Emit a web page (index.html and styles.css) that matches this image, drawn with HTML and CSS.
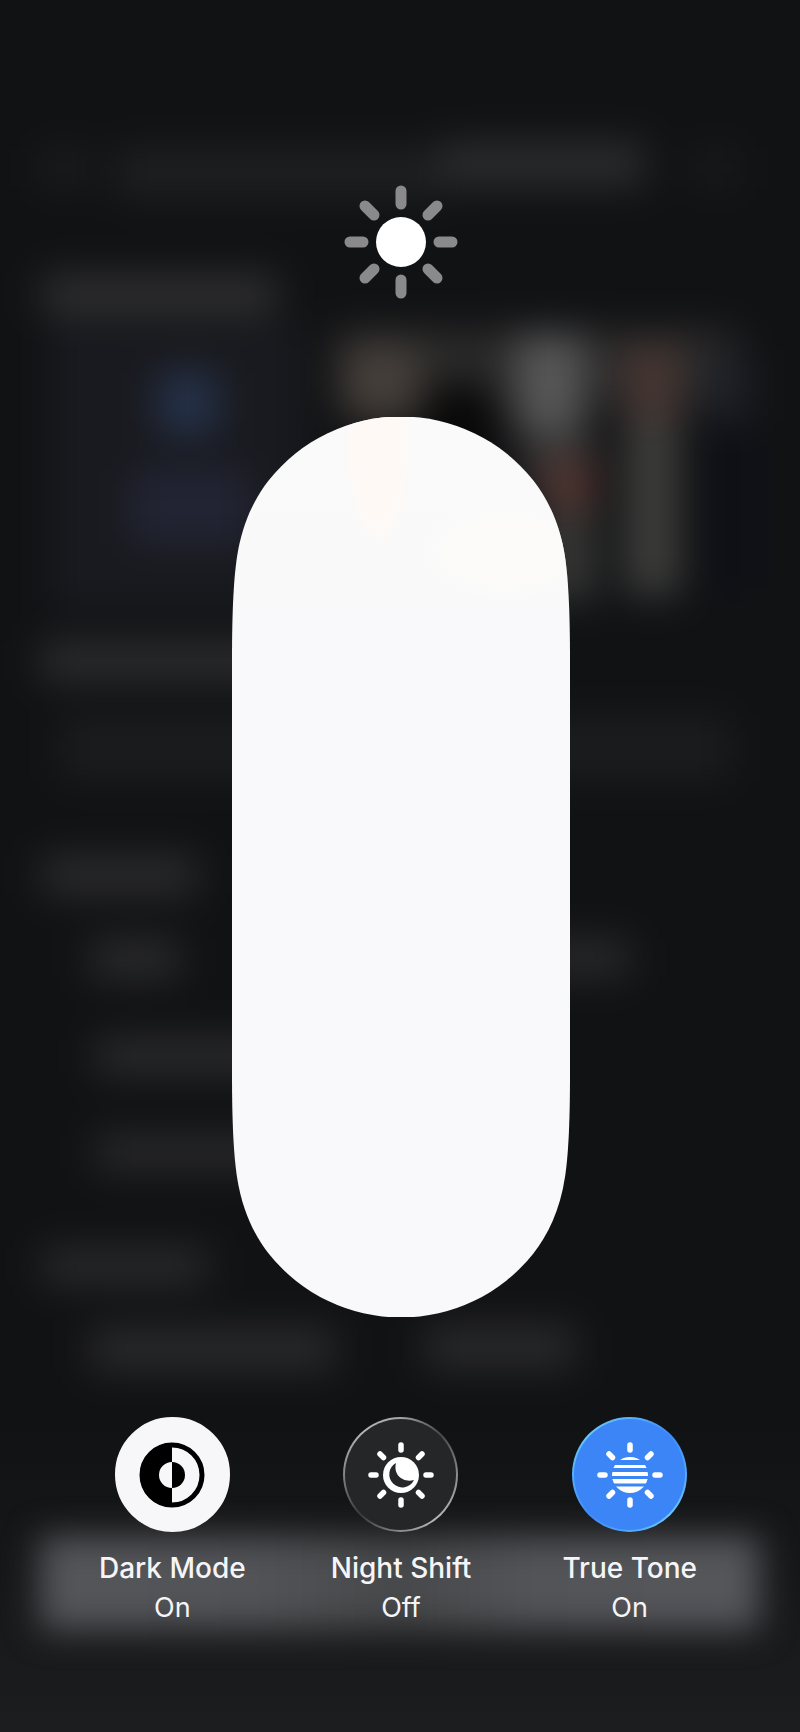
FILE: index.html
```html
<!DOCTYPE html>
<html lang="en">
  <head>
    <meta charset="UTF-8" />
    <meta name="viewport" content="width=device-width, initial-scale=1.0" />
    <title>Display Brightness</title>
    <link rel="stylesheet" href="styles.css">
  </head>
  <body>
    <!-- blurred home screen behind the panel -->
    <svg class="backdrop" viewBox="0 0 800 1732" preserveAspectRatio="none" aria-hidden="true">
      <defs>
        <filter id="soft" x="-10%" y="-10%" width="120%" height="120%" color-interpolation-filters="sRGB">
          <feGaussianBlur stdDeviation="19" />
        </filter>
        <filter id="dock" x="-20%" y="-60%" width="140%" height="220%" color-interpolation-filters="sRGB">
          <feGaussianBlur stdDeviation="17" />
        </filter>
        <linearGradient id="dock-fill">
          <stop offset="0" stop-color="#55565a" />
          <stop offset="0.3" stop-color="#525357" />
          <stop offset="0.5" stop-color="#47484a" />
          <stop offset="0.68" stop-color="#535458" />
          <stop offset="1" stop-color="#56575b" />
        </linearGradient>
        <linearGradient id="floor" x1="0" y1="0" x2="0" y2="1">
          <stop offset="0" stop-color="#1c1d1f" stop-opacity="0" />
          <stop offset="1" stop-color="#1c1d1f" />
        </linearGradient>
      </defs>
      <g filter="url(#soft)">
        <rect x="-80" y="-80" width="960" height="1892" fill="#111214" />
        <rect x="40" y="148" width="50" height="40" fill="#1b1c1d" />
        <rect x="115" y="148" width="330" height="50" fill="#1e1f20" />
        <rect x="440" y="142" width="205" height="44" fill="#2b2c2d" />
        <rect x="690" y="148" width="50" height="40" fill="#19191a" />
        <rect x="42" y="274" width="235" height="42" fill="#2e2e2f" />
        <rect x="50" y="325" width="255" height="285" fill="#191a1f" />
        <rect x="158" y="372" width="60" height="62" fill="#25324a" />
        <rect x="130" y="470" width="120" height="74" fill="#222434" />
        <rect x="335" y="330" width="400" height="75" fill="#2b2a2a" />
        <rect x="345" y="345" width="75" height="75" fill="#453f3a" />
        <rect x="425" y="385" width="65" height="80" fill="#090808" />
        <rect x="515" y="335" width="70" height="100" fill="#565656" />
        <rect x="525" y="440" width="70" height="50" fill="#393736" />
        <rect x="545" y="460" width="50" height="60" fill="#523430" />
        <rect x="540" y="510" width="55" height="90" fill="#353634" />
        <rect x="625" y="345" width="55" height="75" fill="#463632" />
        <rect x="625" y="420" width="55" height="175" fill="#3d3d3b" />
        <rect x="705" y="350" width="45" height="70" fill="#1f2128" />
        <rect x="705" y="430" width="50" height="160" fill="#0f1017" />
        <rect x="40" y="642" width="250" height="38" fill="#2d2d2e" />
        <rect x="60" y="716" width="670" height="64" fill="#1b1c1d" />
        <rect x="42" y="856" width="155" height="38" fill="#2c2c2d" />
        <rect x="90" y="940" width="90" height="38" fill="#2b2b2d" />
        <rect x="540" y="940" width="90" height="36" fill="#2a2a2c" />
        <rect x="95" y="1038" width="190" height="36" fill="#2b2b2d" />
        <rect x="95" y="1134" width="190" height="36" fill="#29292b" />
        <rect x="42" y="1248" width="165" height="36" fill="#2a2a2c" />
        <rect x="90" y="1328" width="245" height="42" fill="#2a2a2c" />
        <rect x="425" y="1326" width="150" height="42" fill="#2a2a2c" />
      </g>
      <rect x="0" y="1420" width="800" height="312" fill="url(#floor)" />
      <rect x="40" y="1536" width="720" height="94" fill="url(#dock-fill)" filter="url(#dock)" />
    </svg>

    <main class="panel">
      <svg class="sun" viewBox="-57 -57 114 114" aria-hidden="true">
        <circle r="25" fill="#fff" />
        <g stroke="#8a8a8c" stroke-width="11" stroke-linecap="round">
          <path d="M0 -51V-38M0 51V38M-51 0H-38M51 0H38" />
          <path d="M-36 -36L-27 -27M36 -36L27 -27M-36 36L-27 27M36 36L27 27" />
        </g>
      </svg>

      <input class="slider" type="range" min="0" max="100" value="100" aria-label="Brightness" />

      <div class="controls">
        <button class="control" type="button" aria-pressed="true">
          <span class="disc disc-light">
            <svg class="icon" viewBox="-33 -33 66 66" aria-hidden="true">
              <circle r="30" fill="none" stroke="#000" stroke-width="5" />
              <path d="M0 -32A32 32 0 0 0 0 32V13A13 13 0 0 1 0 -13Z" fill="#000" />
              <path d="M0 -13A13 13 0 0 1 0 13Z" fill="#000" />
            </svg>
          </span>
          <span class="name">Dark Mode</span>
          <span class="state">On</span>
        </button>

        <button class="control" type="button" aria-pressed="false">
          <span class="disc disc-dark">
            <svg class="icon" viewBox="-33 -33 66 66" aria-hidden="true">
              <circle r="18" fill="#fff" />
              <path d="M-5 -12A13 13 0 1 0 13 5C2 8 -8 0 -5 -12Z" fill="#252628" />
              <g stroke="#fff" stroke-width="5.500" stroke-linecap="round">
                <path d="M0 -30V-25M0 30V25M-30 0H-25M30 0H25" />
                <path d="M-21 -21L-17.500 -17.500M21 -21L17.500 -17.500M-21 21L-17.500 17.500M21 21L17.500 17.500" />
              </g>
            </svg>
          </span>
          <span class="name">Night Shift</span>
          <span class="state">Off</span>
        </button>

        <button class="control" type="button" aria-pressed="true">
          <span class="disc disc-blue">
            <svg class="icon" viewBox="-33 -33 66 66" aria-hidden="true">
              <clipPath id="tone"><circle r="18" /></clipPath>
              <path clip-path="url(#tone)" d="M-18 -18h36v3h-36zM-18 -10h36v3h-36zM-18 -3h36v4h-36zM-18 4h36v4.500h-36zM-18 11.500h36v7h-36z" fill="#fff" />
              <g stroke="#fff" stroke-width="5.500" stroke-linecap="round">
                <path d="M0 -30V-25M0 30V25M-30 0H-25M30 0H25" />
                <path d="M-21 -21L-17.500 -17.500M21 -21L17.500 -17.500M-21 21L-17.500 17.500M21 21L17.500 17.500" />
              </g>
            </svg>
          </span>
          <span class="name">True Tone</span>
          <span class="state">On</span>
        </button>
      </div>
    </main>
  </body>
</html>
```
FILE: styles.css
```css
* {
  box-sizing: border-box;
}
body {
  margin: 0;
  position: relative;
  min-height: 100vh;
  background-color: #111214;
  color: #f5f5f7;
  font-family: Inter, "Liberation Sans", sans-serif;
}
.backdrop {
  position: absolute;
  inset: 0;
  width: 100%;
  height: 100%;
}
.panel {
  position: relative;
  display: flex;
  flex-direction: column;
  align-items: center;
  padding: 185px 56px 96px 58px;
}
.sun {
  width: 114px;
  height: 114px;
  margin-bottom: 118px;
}

/* brightness track, always drawn full */
.slider {
  appearance: none;
  writing-mode: vertical-lr;
  direction: rtl;
  width: 338px;
  height: 900px;
  margin: 0 0 100px;
  cursor: pointer;
  background:
    radial-gradient(ellipse 36px 110px at 146px 30px, #fff9f5 60%, transparent),
    radial-gradient(ellipse 90px 50px at 275px 135px, #fcfbf9 50%, transparent),
    linear-gradient(#fafafa, #f9f9fb 25%);
  clip-path: path("M0 243C0 190 2 160 5 140C10 107 22 82 37 63A169 169 0 0 1 301 63C316 82 328 107 333 140C336 160 338 190 338 243V657C338 710 336 740 333 760C328 793 316 818 301 837A169 169 0 0 1 37 837C22 818 10 793 5 760C2 740 0 710 0 657Z");
}
.slider::-webkit-slider-thumb {
  appearance: none;
  width: 338px;
  height: 1px;
  background: transparent;
}

.controls {
  display: grid;
  grid-template-columns: repeat(3, 1fr);
  width: 100%;
}
.control {
  display: flex;
  flex-direction: column;
  align-items: center;
  padding: 0;
  border: none;
  background: none;
  color: inherit;
  font: inherit;
  line-height: 39px;
  cursor: pointer;
}
.disc {
  display: flex;
  align-items: center;
  justify-content: center;
  width: 115px;
  height: 115px;
  margin-bottom: 17px;
  border: 2px solid transparent;
  border-radius: 50%;
}
.disc-light {
  background: #f7f7fa;
  border-color: #f7f7fa;
}
.disc-dark {
  background:
    linear-gradient(#252628, #252628) padding-box,
    conic-gradient(#a5a6a7, #48494b 45deg, #8a8b8c 90deg, #b5b6b7 140deg, #8a8b8c 180deg, #38393b 225deg, #8a8b8c 275deg, #b5b6b7 320deg, #a5a6a7) border-box;
}
.disc-blue {
  background:
    linear-gradient(#3b85f7, #3b85f7) padding-box,
    conic-gradient(#5cb4fa, #3f8af7 45deg, #55a8f9 90deg, #6cc8fb 135deg, #55a8f9 180deg, #3f8af7 225deg, #55b0f9 270deg, #6cc8fb 315deg, #5cb4fa) border-box;
}
.icon {
  width: 66px;
  height: 66px;
}
.name {
  font-size: 28px;
  font-weight: 500;
}
.state {
  font-size: 27px;
  font-weight: 400;
}
```
